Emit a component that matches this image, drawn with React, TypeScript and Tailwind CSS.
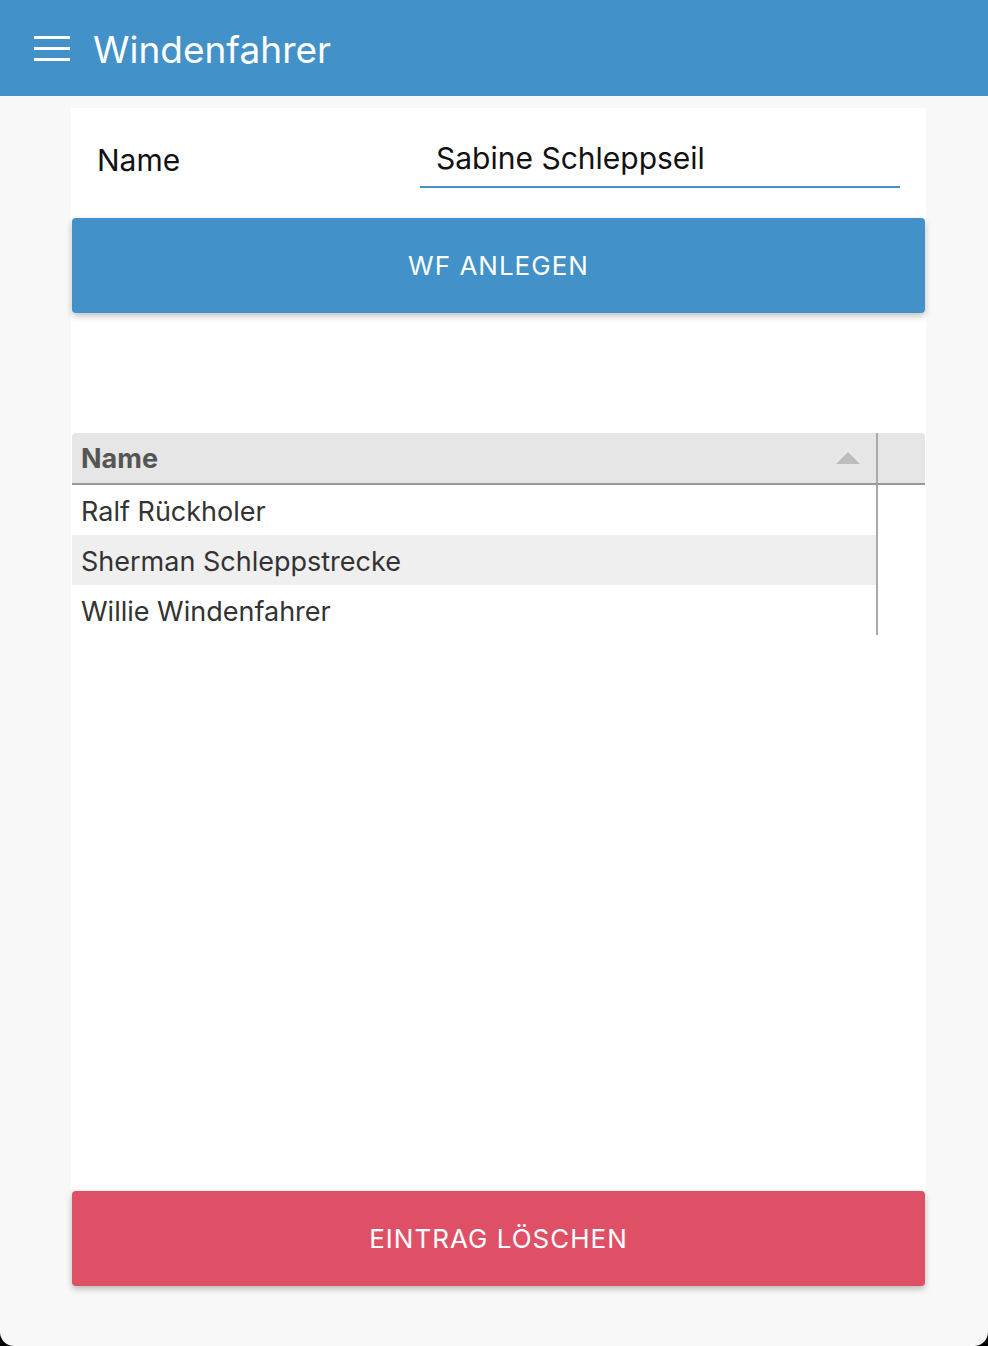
import React from 'react';

const rows = ['Ralf Rückholer', 'Sherman Schleppstrecke', 'Willie Windenfahrer'];

const App: React.FC = () => {
  return (
    <div className="h-[1346px] w-[988px] bg-black" style={{ fontFamily: 'Inter, "Liberation Sans", sans-serif' }}>
      <div className="flex h-full flex-col rounded-b-[14px] bg-[#f8f8f8]">
        {/* App bar */}
        <header className="flex h-[96px] items-center bg-[#4292c9] pl-[34px]">
          <div className="flex w-[36px] flex-col gap-[8px]">
            <span className="h-[3px] bg-white" />
            <span className="h-[3px] bg-white" />
            <span className="h-[3px] bg-white" />
          </div>
          <h1 className="mb-[-4px] ml-[23px] text-[37px] text-white">Windenfahrer</h1>
        </header>

        {/* Content card */}
        <main className="ml-[71px] mr-[62px] mt-[12px] flex flex-1 flex-col bg-white">
          <div className="flex h-[110px] items-start px-[26px] pt-[28px]">
            <label className="mt-[2px] w-[323px] text-[30px] text-[#111]">Name</label>
            <div className="flex-1 border-b-2 border-[#4292c9] pb-[5px] pl-[16px] text-[30px] text-[#111]">
              Sabine Schleppseil
            </div>
          </div>

          <button className="mx-[1px] h-[95px] rounded-[4px] bg-[#4292c9] text-[26px] tracking-[1px] text-white shadow-[0_3px_6px_rgba(0,0,0,0.25)]">
            WF ANLEGEN
          </button>

          {/* Table */}
          <div className="mx-[1px] mt-[120px]">
            <div className="flex h-[52px] rounded-t-[4px] border-b-2 border-[#999] bg-[#e6e6e6]">
              <div className="flex w-[806px] items-center justify-between border-r-2 border-[#aaa] pl-[9px] pr-[16px]">
                <span className="pt-[3px] text-[27px] font-bold text-[#555]">Name</span>
                <svg width="24" height="12" viewBox="0 0 24 12">
                  <path d="M12 0 L24 12 L0 12 Z" fill="#bdbdbd" />
                </svg>
              </div>
              <div className="flex-1" />
            </div>
            {rows.map((r, i) => (
              <div key={r} className="flex h-[50px]">
                <div
                  className={`flex w-[806px] items-center border-r-2 border-[#aaa] pl-[9px] pt-[4px] text-[27px] text-[#333] ${
                    i === 1 ? 'bg-[#efefef]' : 'bg-white'
                  }`}
                >
                  {r}
                </div>
              </div>
            ))}
          </div>

          <div className="flex-1" />

          <button className="mx-[1px] mb-[-96px] h-[95px] rounded-[4px] bg-[#df5067] text-[26px] tracking-[1px] text-white shadow-[0_3px_6px_rgba(0,0,0,0.25)]">
            EINTRAG LÖSCHEN
          </button>
        </main>
        <div className="h-[156px]" />
      </div>
    </div>
  );
};

export default App;
